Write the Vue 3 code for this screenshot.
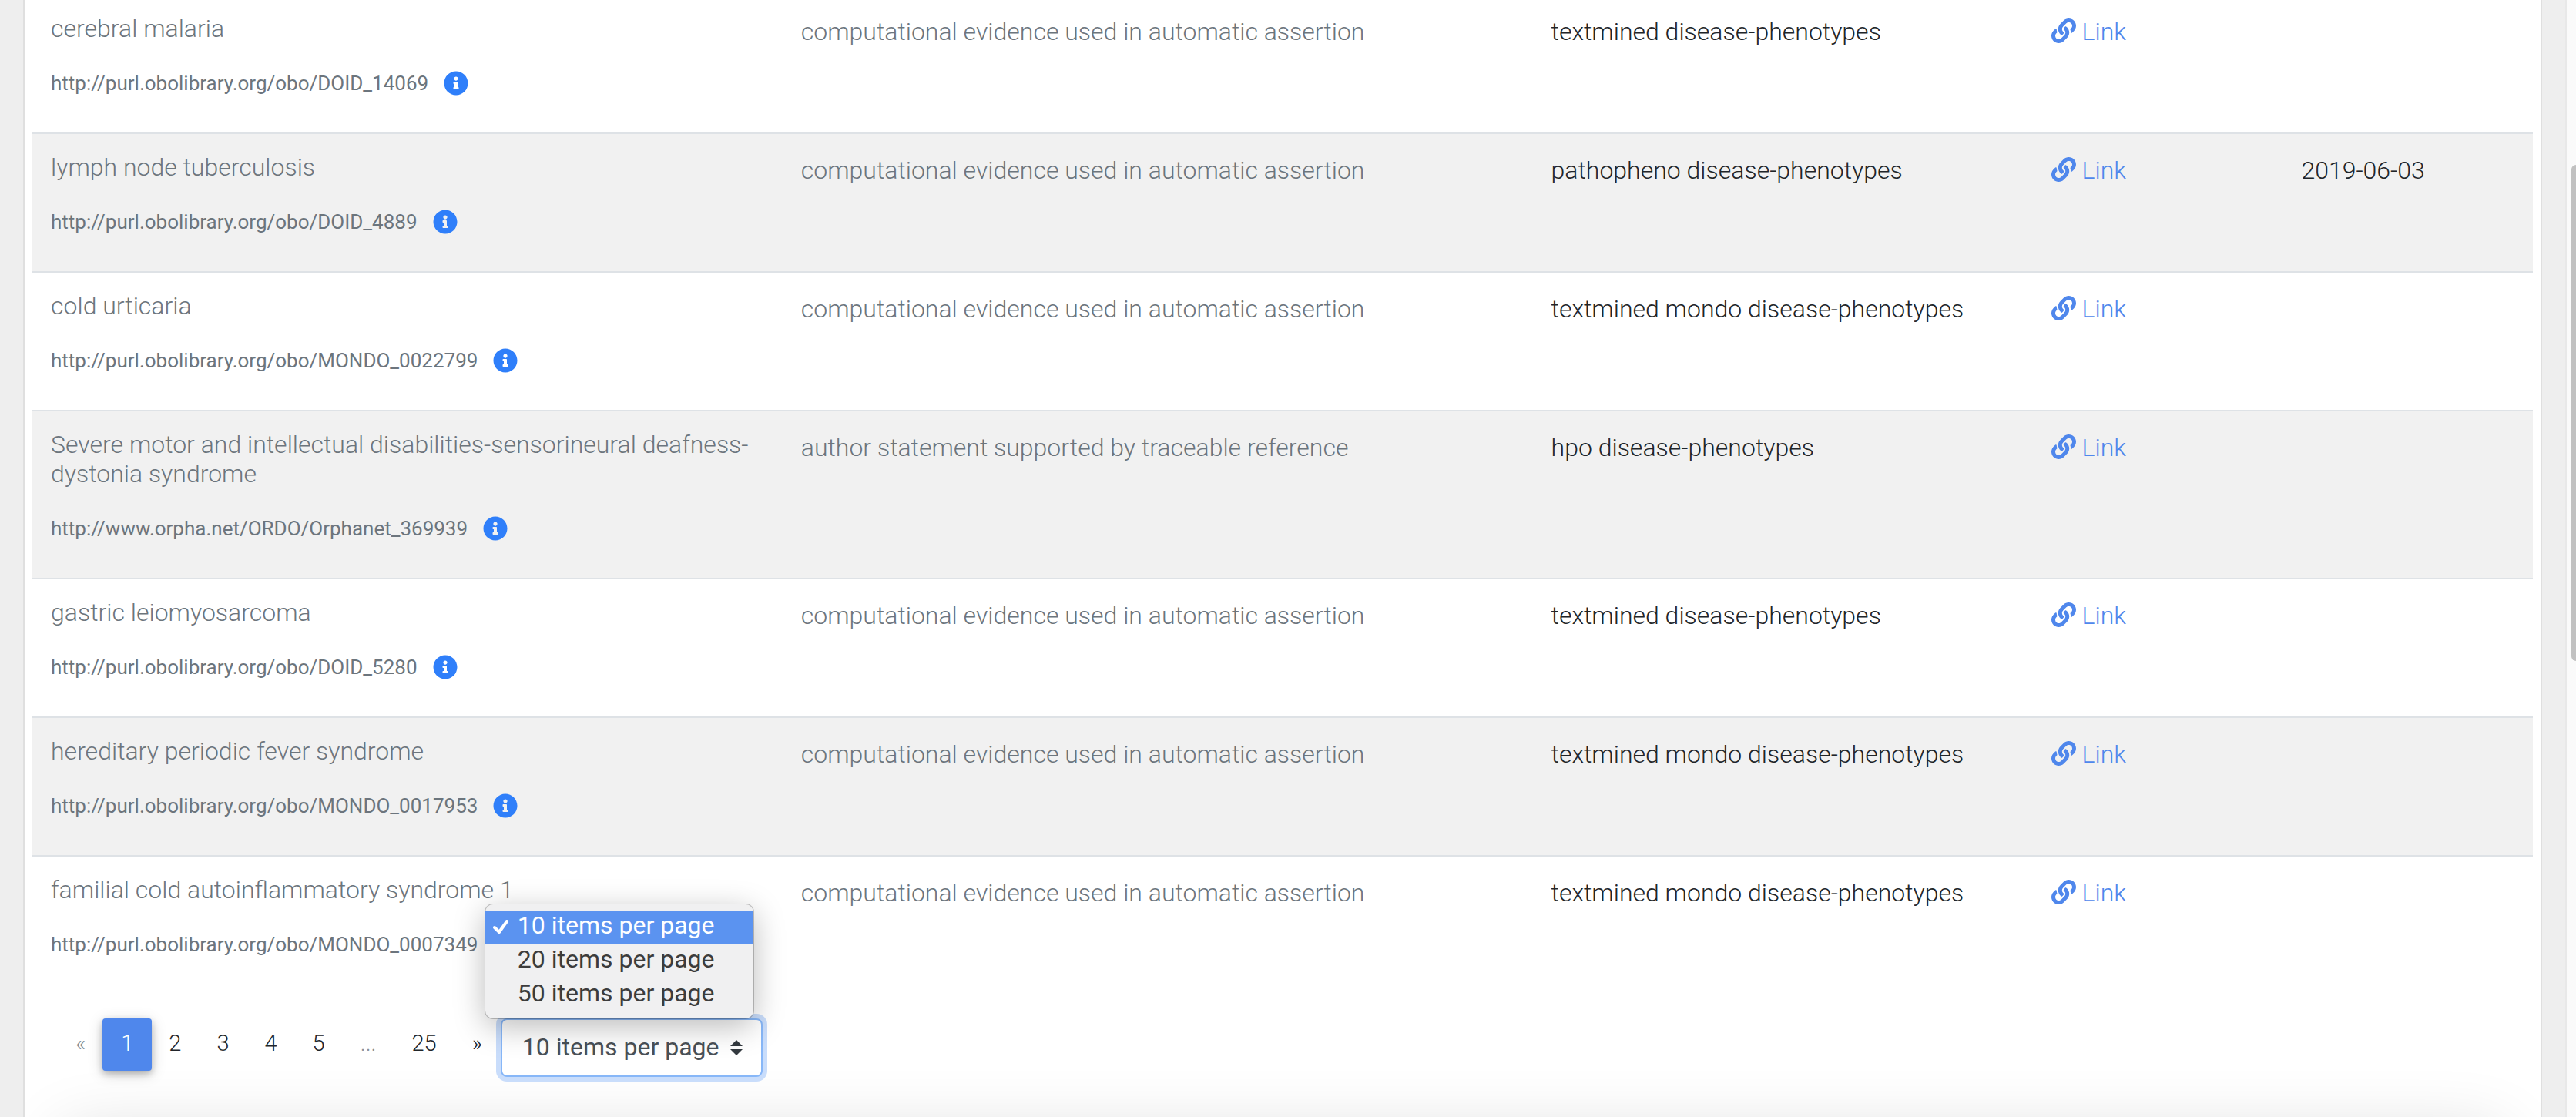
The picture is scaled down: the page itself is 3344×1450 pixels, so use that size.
<script setup>
import { ref } from 'vue'

const auto = 'computational evidence used in automatic assertion'
const obo = 'http://purl.obolibrary.org/obo/'

const rows = [
  { name: 'cerebral malaria', iri: obo + 'DOID_14069', evidence: auto, source: 'textmined disease-phenotypes', date: '' },
  { name: 'lymph node tuberculosis', iri: obo + 'DOID_4889', evidence: auto, source: 'pathopheno disease-phenotypes', date: '2019-06-03' },
  { name: 'cold urticaria', iri: obo + 'MONDO_0022799', evidence: auto, source: 'textmined mondo disease-phenotypes', date: '' },
  {
    name: 'Severe motor and intellectual disabilities-sensorineural deafness-dystonia syndrome',
    iri: 'http://www.orpha.net/ORDO/Orphanet_369939',
    evidence: 'author statement supported by traceable reference',
    source: 'hpo disease-phenotypes',
    date: ''
  },
  { name: 'gastric leiomyosarcoma', iri: obo + 'DOID_5280', evidence: auto, source: 'textmined disease-phenotypes', date: '' },
  { name: 'hereditary periodic fever syndrome', iri: obo + 'MONDO_0017953', evidence: auto, source: 'textmined mondo disease-phenotypes', date: '' },
  { name: 'familial cold autoinflammatory syndrome 1', iri: obo + 'MONDO_0007349', evidence: auto, source: 'textmined mondo disease-phenotypes', date: '' }
]

const pages = ['«', '1', '2', '3', '4', '5', '...', '25', '»']
const current = ref('1')
const disabled = (p) => p === '«' || p === '...'

const sizes = [10, 20, 50]
const size = ref(10)
</script>

<template>
  <div class="page">
    <main class="card">
      <table class="results">
        <colgroup>
          <col class="wide" /><col class="wide" /><col class="medium" /><col class="narrow" /><col class="narrow" />
        </colgroup>
        <tbody>
          <tr v-for="row in rows" :key="row.iri">
            <td>
              <h6 class="name">{{ row.name }}</h6>
              <p class="iri">
                <small>{{ row.iri }}</small>
                <svg class="info" viewBox="0 0 512 512" aria-hidden="true">
                  <path d="M256 8C119.043 8 8 119.083 8 256c0 136.997 111.043 248 248 248s248-111.003 248-248C504 119.083 392.957 8 256 8zm0 110c23.196 0 42 18.804 42 42s-18.804 42-42 42-42-18.804-42-42 18.804-42 42-42zm56 254c0 6.627-5.373 12-12 12h-88c-6.627 0-12-5.373-12-12v-24c0-6.627 5.373-12 12-12h12v-64h-12c-6.627 0-12-5.373-12-12v-24c0-6.627 5.373-12 12-12h64c6.627 0 12 5.373 12 12v100h12c6.627 0 12 5.373 12 12v24z" />
                </svg>
              </p>
            </td>
            <td class="muted">{{ row.evidence }}</td>
            <td>{{ row.source }}</td>
            <td>
              <a class="link" href="#"><svg viewBox="0 0 512 512" aria-hidden="true">
                <path d="M326.612 185.391c59.747 59.809 58.927 155.698.36 214.59-.11.12-.24.25-.36.37l-67.2 67.2c-59.27 59.27-155.699 59.262-214.96 0-59.27-59.26-59.27-155.7 0-214.96l37.106-37.106c9.84-9.84 26.786-3.3 27.294 10.606.648 17.722 3.826 35.527 9.69 52.721 1.986 5.822.567 12.262-3.783 16.612l-13.087 13.087c-28.026 28.026-28.905 73.66-1.155 101.96 28.024 28.579 74.086 28.749 102.325.51l67.2-67.19c28.191-28.191 28.073-73.757 0-101.83-3.701-3.694-7.429-6.564-10.341-8.569a16.037 16.037 0 0 1-6.947-12.606c-.396-10.567 3.348-21.456 11.698-29.806l21.054-21.055c5.521-5.521 14.182-6.199 20.584-1.731a152.482 152.482 0 0 1 20.522 17.197zM467.547 44.449c-59.261-59.262-155.69-59.27-214.96 0l-67.2 67.2c-.12.12-.25.25-.36.37-58.566 58.892-59.387 154.781.36 214.59a152.454 152.454 0 0 0 20.521 17.196c6.402 4.468 15.064 3.789 20.584-1.731l21.054-21.055c8.35-8.35 12.094-19.239 11.698-29.806a16.037 16.037 0 0 0-6.947-12.606c-2.912-2.005-6.64-4.875-10.341-8.569-28.073-28.073-28.191-73.639 0-101.83l67.2-67.19c28.239-28.239 74.3-28.069 102.325.51 27.75 28.3 26.872 73.934-1.155 101.96l-13.087 13.087c-4.35 4.35-5.769 10.79-3.783 16.612 5.864 17.194 9.042 34.999 9.69 52.721.509 13.906 17.454 20.446 27.294 10.606l37.106-37.106c59.271-59.259 59.271-155.699.001-214.959z" />
              </svg> Link</a>
            </td>
            <td>{{ row.date }}</td>
          </tr>
        </tbody>
      </table>

      <div class="controls">
        <nav class="pagination" aria-label="Pages">
          <button
            v-for="p in pages"
            :key="p"
            type="button"
            :class="{ active: p === current }"
            :disabled="disabled(p)"
            @click="current = p"
          >{{ p }}</button>
        </nav>
        <div class="page-size">
          <select v-model="size" aria-label="Items per page">
            <option v-for="n in sizes" :key="n" :value="n">{{ n }} items per page</option>
          </select>
          <svg class="caret" viewBox="0 0 4 5" aria-hidden="true"><path d="M2 0L0 2h4zm0 5L0 3h4z" /></svg>
          <ul class="menu" role="listbox" aria-label="Items per page">
            <li v-for="n in sizes" :key="n" role="option" :aria-selected="n === size" :class="{ chosen: n === size }" @click="size = n">
              <svg v-if="n === size" class="check" viewBox="0 0 20 18" aria-hidden="true"><path d="M2 10l6 6L18 2" /></svg>
              {{ n }} items per page
            </li>
          </ul>
        </div>
      </div>
      <div class="panel"></div>
    </main>
    <div class="scrollbar" aria-hidden="true"><div class="thumb"></div></div>
  </div>
</template>

<style>
body {
  background: #eee;
}
</style>

<style scoped>
* {
  box-sizing: border-box;
}

.page {
  display: flex;
  height: 100vh;
  overflow: hidden;
  color: #212529;
  font-family: Roboto, "Liberation Sans", sans-serif;
  font-size: 32px;
  font-weight: 300;
  line-height: 46px;
}

.card {
  flex: 1;
  min-width: 0;
  margin: 0 30px;
  padding: 0 10px;
  overflow: hidden;
  background: #fff;
  border: solid #dfdfdf;
  border-width: 0 2px;
}

/* The list is scrolled, so its first row starts above the window. */
.results {
  width: 100%;
  margin-top: -8px;
  border-collapse: separate;
  border-spacing: 0;
  table-layout: fixed;
}

.wide { width: 30%; }
.medium { width: 20%; }
.narrow { width: 10%; }

.results td {
  padding: 24px;
  border-top: 2px solid #dee2e6;
  vertical-align: top;
}

.results tr:nth-child(even) {
  background: #f1f1f1;
}

.results .muted {
  color: #6c757d;
}

.name {
  margin: 0 0 28px;
  color: #6c757d;
  font-size: 32px;
  font-weight: 300;
  line-height: 38px;
}

.iri {
  display: flex;
  align-items: center;
  gap: 20px;
  height: 48px;
  margin: 0 0 16px;
  color: #6c757d;
}

.iri small {
  font-size: 26px;
  font-weight: 400;
}

.info {
  width: 32px;
  height: 32px;
  fill: #2f7ffa;
}

.link {
  color: #4f87ec;
  text-decoration: none;
}

.link svg {
  width: 32px;
  height: 32px;
  fill: currentColor;
  vertical-align: -4px;
}

.controls {
  display: flex;
  align-items: flex-start;
  padding: 32px 32px 0;
}

.pagination {
  display: flex;
}

.pagination button {
  min-width: 60px;
  height: 68px;
  margin: 0 0 0 -2px;
  padding: 14px 24px 18px;
  background: none;
  border: 0;
  border-radius: 4px;
  color: #212529;
  font: inherit;
  font-size: 29px;
  line-height: 36px;
}

.pagination button:first-child {
  margin-left: 0;
}

.pagination button:disabled {
  color: #868e96;
}

.pagination button.active {
  background: #4f87ec;
  box-shadow: 0 4px 10px rgba(0, 0, 0, 0.24), 0 4px 20px rgba(0, 0, 0, 0.16);
  color: #fff;
}

.page-size {
  position: relative;
  width: 340px;
}

.page-size select {
  display: block;
  width: 100%;
  height: 76px;
  padding: 0 26px 2px;
  appearance: none;
  background: #fff;
  border: 2px solid #87b7f8;
  border-radius: 8px;
  outline: 0;
  box-shadow: 0 0 0 6px #c9ddfb;
  color: #495057;
  font: inherit;
  font-weight: 400;
}

.caret {
  position: absolute;
  top: 28px;
  right: 26px;
  width: 16px;
  height: 20px;
  fill: #343a40;
  pointer-events: none;
}

.menu {
  position: absolute;
  bottom: 100%;
  left: -20px;
  width: 348px;
  margin: 0;
  padding: 8px 0;
  list-style: none;
  background: #f0f0f1;
  border-radius: 10px;
  box-shadow: 0 0 0 1px rgba(0, 0, 0, 0.22), 0 10px 40px rgba(0, 0, 0, 0.28);
  color: #3c3c3c;
  font-weight: 400;
}

.menu li {
  position: relative;
  height: 44px;
  padding-left: 42px;
  line-height: 38px;
  white-space: nowrap;
}

.menu .chosen {
  background: #5b93f0;
  color: #fff;
}

.check {
  position: absolute;
  top: 12px;
  left: 10px;
  width: 20px;
  height: 18px;
  fill: none;
  stroke: currentColor;
  stroke-width: 4;
  stroke-linecap: round;
  stroke-linejoin: round;
}

.panel {
  height: 200px;
  margin: 76px 40px 0;
  background: #fff;
  box-shadow: 0 0 90px rgba(0, 0, 0, 0.16);
}

.scrollbar {
  width: 14px;
  padding: 214px 0 0 6px;
  background: #fafafa;
  border-left: 2px solid #e8e8e8;
}

.thumb {
  height: 644px;
  background: #c1c1c1;
  border-radius: 8px 0 0 8px;
}
</style>
